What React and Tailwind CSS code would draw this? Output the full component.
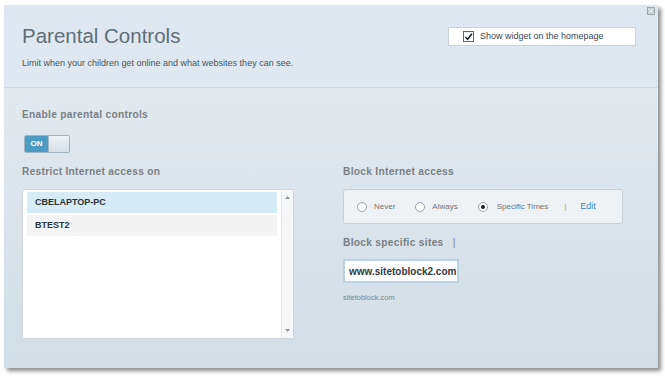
export default function App() {
  const font = { fontFamily: '"Liberation Sans", Arial, sans-serif' };
  return (
    <div className="w-[665px] h-[376px] bg-white overflow-hidden" style={font}>
      <div className="ml-[4px] mt-[5px] w-[654px] h-[363px] flex flex-col relative shadow-[3px_3px_4px_rgba(0,0,0,0.45)] bg-gradient-to-b from-[#e7edf2] to-[#d2dde5]">
        {/* close */}
        <div className="absolute right-[3px] top-[2px] w-[8px] h-[8px] border border-[#9aa4ab] bg-[#c5ccd2] flex items-center justify-center">
          <svg width="6" height="6" viewBox="0 0 6 6"><path d="M0.5 0.5L5.5 5.5M5.5 0.5L0.5 5.5" stroke="#eef2f5" strokeWidth="1" /></svg>
        </div>
        {/* header */}
        <div className="h-[83px] bg-[#dfe8f0] border-b border-[#cfd9e1] flex justify-between px-[18px]">
          <div className="pt-[19px]">
            <div className="text-[20.5px] leading-[24px] text-[#5e6e7a] font-light">Parental Controls</div>
            <div className="mt-[9px] text-[9px] leading-[12px] text-[#48545e]">Limit when your children get online and what websites they can see.</div>
          </div>
          <div className="mt-[22px] mr-[4px] w-[188px] h-[19px] bg-white border border-[#ccd3d8] flex items-center pl-[14px]">
            <div className="w-[11px] h-[11px] border border-[#5b6670] bg-white flex items-center justify-center">
              <svg width="10" height="10" viewBox="0 0 10 10"><path d="M1.5 5L4 7.5L8.8 1.5" stroke="#1a2430" strokeWidth="1.8" fill="none" /></svg>
            </div>
            <span className="ml-[6px] text-[9px] text-[#404a52]">Show widget on the homepage</span>
          </div>
        </div>
        {/* body */}
        <div className="px-[18px] pt-[21px]">
          <div className="text-[10.2px] font-bold text-[#7a7f84] tracking-[0.3px] leading-[12px]">Enable parental controls</div>
          <div className="mt-[14px] ml-[2px] w-[46px] h-[18px] flex rounded-[2px] border border-[#9fb3c0] overflow-hidden">
            <div className="w-[23px] bg-[#4b9cc2] text-white text-[8px] font-bold flex items-center justify-center">ON</div>
            <div className="flex-1 bg-gradient-to-b from-[#eef3f6] to-[#d5e0e7] border-l border-[#a6b6c0]"></div>
          </div>
          <div className="flex mt-[13px]">
            <div className="w-[272px]">
              <div className="text-[10.2px] font-bold text-[#7a7f84] tracking-[0.3px] leading-[12px]">Restrict Internet access on</div>
              <div className="mt-[11px] h-[150px] bg-white border border-[#cfd6db] rounded-[2px] flex pt-[2px] pl-[4px] pr-[0px]">
                <div className="flex-1 flex flex-col gap-[2px]">
                  <div className="h-[21px] bg-[#d5ebf6] flex items-center pl-[8px] text-[9px] font-bold text-[#2c3338]">CBELAPTOP-PC</div>
                  <div className="h-[21px] bg-[#f4f4f4] flex items-center pl-[8px] text-[9px] font-bold text-[#2c3338]">BTEST2</div>
                </div>
                <div className="w-[12px] ml-[4px] mt-[-2px] bg-[#f6f7f8] border-l border-[#e4e7e9] flex flex-col justify-between items-center py-[6px]">
                  <svg width="5" height="3" viewBox="0 0 5 3"><path d="M0 3L2.5 0L5 3Z" fill="#8a9298" /></svg>
                  <svg width="5" height="3" viewBox="0 0 5 3"><path d="M0 0L2.5 3L5 0Z" fill="#8a9298" /></svg>
                </div>
              </div>
            </div>
            <div className="ml-[49px] flex-1 pr-[17px]">
              <div className="text-[10.2px] font-bold text-[#7a7f84] tracking-[0.3px] leading-[12px]">Block Internet access</div>
              <div className="mt-[11px] h-[35px] border border-[#c7cfd5] rounded-[3px] bg-[#eef2f5] flex items-center pl-[13px] text-[8px] text-[#6b747b]">
                <div className="w-[10px] h-[10px] rounded-full border border-[#9aa3a9] bg-white"></div>
                <span className="ml-[7px]">Never</span>
                <div className="ml-[20px] w-[10px] h-[10px] rounded-full border border-[#9aa3a9] bg-white"></div>
                <span className="ml-[7px]">Always</span>
                <div className="ml-[20px] w-[10px] h-[10px] rounded-full border border-[#9aa3a9] bg-white flex items-center justify-center">
                  <div className="w-[4px] h-[4px] rounded-full bg-[#1c2228]"></div>
                </div>
                <span className="ml-[9px]">Specific Times</span>
                <span className="ml-[16px] text-[#9aa3a9]">|</span>
                <span className="ml-[14px] text-[9px] text-[#3d86c0]">Edit</span>
              </div>
              <div className="mt-[13px] text-[10.2px] font-bold text-[#7a7f84] tracking-[0.3px] leading-[12px]">Block specific sites <span className="ml-[6px] font-normal">|</span></div>
              <div className="mt-[10px] w-[116px] h-[24px] bg-white border-2 border-[#bcd3e6] flex items-center pl-[4px] text-[10px] font-bold text-[#333a40]">www.sitetoblock2.com</div>
              <div className="mt-[9px] text-[7.5px] text-[#7c858b]">sitetoblock.com</div>
            </div>
          </div>
        </div>
      </div>
    </div>
  );
}
